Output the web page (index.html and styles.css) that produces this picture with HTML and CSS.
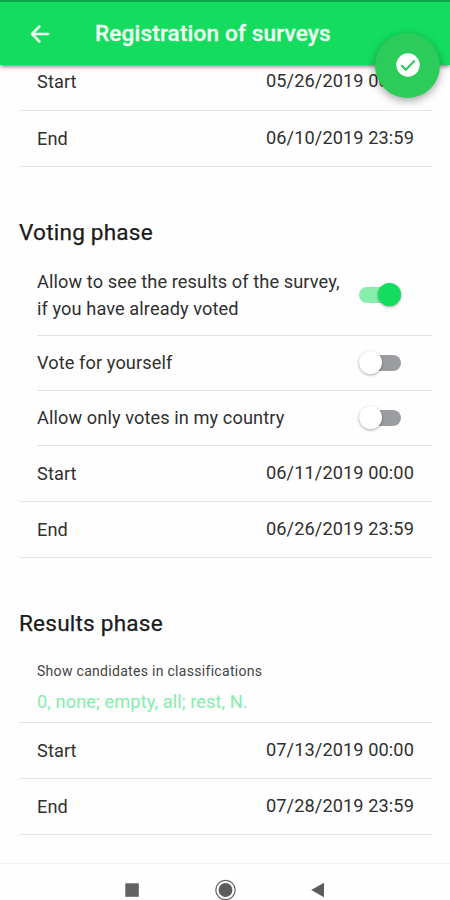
FILE: index.html
```html
<!DOCTYPE html>
<html lang="en">
<head>
<meta charset="utf-8">
<title>Registration of surveys</title>
<link rel="stylesheet" href="styles.css">
</head>
<body>
<div class="screen">
  <header class="toolbar">
    <svg class="back" viewBox="0 0 20 20"><path d="M18.2 10H2.5M9.4 2.5 2 10l7.4 7.5" fill="none" stroke="currentColor" stroke-width="2.5" stroke-linecap="round" stroke-linejoin="round"/></svg>
    <h1 class="title">Registration of surveys</h1>
    <button class="fab" aria-label="Save">
      <svg viewBox="0 0 24 24"><circle cx="12" cy="12" r="11.7" fill="#fff"/><path d="m5.3 12.2 4.5 4.5 9-9.2" fill="none" stroke="#2bcc59" stroke-width="2.1"/></svg>
    </button>
  </header>
  <main class="content">
    <div class="row row-clipped"><span class="label">Start</span><span class="date">05/26/2019 00:00</span></div>
    <div class="row"><span class="label">End</span><span class="date">06/10/2019 23:59</span></div>

    <h2 class="heading">Voting phase</h2>
    <div class="option option-tall"><span class="label">Allow to see the results of the survey,<br>if you have already voted</span><span class="toggle on"></span></div>
    <div class="option"><span class="label">Vote for yourself</span><span class="toggle"></span></div>
    <div class="option"><span class="label">Allow only votes in my country</span><span class="toggle"></span></div>
    <div class="row"><span class="label">Start</span><span class="date">06/11/2019 00:00</span></div>
    <div class="row"><span class="label">End</span><span class="date">06/26/2019 23:59</span></div>

    <h2 class="heading">Results phase</h2>
    <div class="field"><span class="caption">Show candidates in classifications</span><span class="placeholder">0, none; empty, all; rest, N.</span></div>
    <div class="row"><span class="label">Start</span><span class="date">07/13/2019 00:00</span></div>
    <div class="row"><span class="label">End</span><span class="date">07/28/2019 23:59</span></div>
  </main>
  <nav class="navbar">
    <svg viewBox="0 0 24 24"><rect x="5.3" y="5.3" width="13.5" height="13.5" fill="#626262"/></svg>
    <svg viewBox="0 0 24 24"><circle cx="12.5" cy="12" r="9.7" fill="none" stroke="#666" stroke-width="1.2"/><circle cx="12.5" cy="12" r="6.9" fill="#5c5c5c"/></svg>
    <svg viewBox="0 0 24 24"><path d="M5.2 12 18 4.8v14.4z" fill="#5c5c5c"/></svg>
  </nav>
</div>
</body>
</html>
```
FILE: styles.css
```css
* { box-sizing: border-box; }
body { margin: 0; background: #fff; font-family: Roboto, sans-serif; color: #303030; }
.screen { width: 450px; height: 900px; overflow: hidden; display: flex; flex-direction: column; background: #fefefe; }
.toolbar {
  position: relative; z-index: 1; flex: none; height: 65px; padding: 0 0 0 30px;
  display: flex; align-items: center; gap: 45px;
  background: #13dc5e; border-top: 2px solid #0ba748; color: #effff3;
  box-shadow: 0 1px 5px rgba(0, 0, 0, .6);
}
.back { width: 20px; height: 20px; }
.title { margin: 0; font-size: 22.6px; font-weight: 500; line-height: 30px; letter-spacing: .14px; -webkit-text-stroke: .3px; }
.fab {
  position: absolute; left: 375px; top: 31px; width: 65px; height: 65px; padding: 0;
  display: flex; align-items: center; justify-content: center;
  border: 0; border-radius: 50%; background: #2bcc59;
  box-shadow: 0 3px 8px rgba(0, 0, 0, .35);
}
.fab svg { width: 24px; height: 24px; margin-top: -1px; }
.content { flex: none; height: 798px; padding: 0 18px 0 19px; font-size: 18.2px; line-height: 27px; letter-spacing: .09px; }
.row {
  height: 56px; padding: 0 18px; border-bottom: 1.5px solid #e6e6e6;
  display: flex; align-items: center; justify-content: space-between;
}
.row-clipped { height: 46px; padding-bottom: 12px; }
.date { position: relative; top: -1px; }
.heading { margin: 50px 0 0; height: 31px; font-size: 22.6px; font-weight: 400; line-height: 32px; letter-spacing: .2px; color: #1c1c1c; -webkit-text-stroke: .25px; }
.option {
  height: 55px; margin-left: 18px; padding: 0 30px 1px 0; border-bottom: 1.5px solid #e2e2e2;
  display: flex; align-items: center; justify-content: space-between;
}
.option-tall { height: 88px; padding-top: 7px; }
.toggle {
  position: relative; flex: none; width: 42px; height: 16px; margin-right: 1px;
  border-radius: 8px; background: #9c9da1;
}
.toggle::before {
  content: ""; position: absolute; left: 0; top: -4px; width: 23px; height: 23px;
  border-radius: 50%; background: #fff; box-shadow: 0 1px 3px rgba(0, 0, 0, .35);
}
.toggle.on { background: #86eeaa; }
.toggle.on::before { left: 19px; background: #13dc5e; }
.field { height: 84px; padding: 20px 18px 0; border-bottom: 1.5px solid #e2e2e2; display: flex; flex-direction: column; }
.caption { font-size: 14px; line-height: 24px; letter-spacing: .3px; color: #444; }
.placeholder { margin-top: 6px; font-size: 18.2px; line-height: 26px; color: #83eeac; }
.navbar {
  flex: 1; border-top: 1.5px solid #f2f2f2; padding-left: 120px;
  display: flex; align-items: center; gap: 69px;
}
.navbar svg { width: 24px; height: 24px; position: relative; top: 8px; }
```
